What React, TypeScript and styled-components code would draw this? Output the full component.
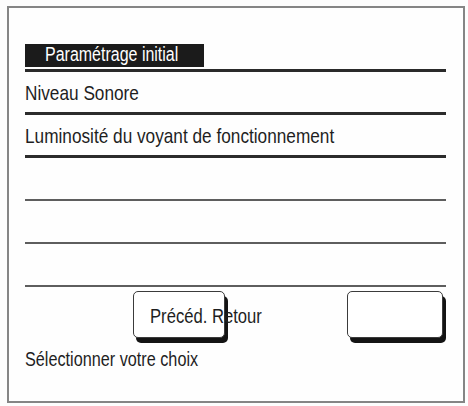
import styled, { createGlobalStyle } from "styled-components";

const fontStack = `"Liberation Sans", Arial, sans-serif`;

const GlobalStyle = createGlobalStyle`
  html, body {
    margin: 0;
    padding: 0;
    background: #fdfdfd;
  }
  body {
    font-family: ${fontStack};
    color: #1e1e1e;
  }
`;

// the screen uses a narrow sans, emulated by squeezing Liberation Sans
const Narrow = styled.span<{ $size: number }>`
  display: inline-block;
  font-size: ${({ $size }) => $size}px;
  white-space: nowrap;
  transform: scaleX(0.82);
  transform-origin: left center;
`;

const Frame = styled.div`
  box-sizing: border-box;
  width: 458px;
  height: 397px;
  margin: 6px 0 0 7px;
  padding: 36px 0 0 16px;
  border: 2px solid #858585;
  background: #fefefe;
  display: flex;
  flex-direction: column;
`;

const Content = styled.div`
  width: 421px;
  display: flex;
  flex-direction: column;
`;

const TitleBar = styled.div`
  box-sizing: border-box;
  width: 179px;
  height: 23px;
  padding-left: 20px;
  background: #1b1b1b;
  color: #ffffff;
  line-height: 21px;
  overflow: hidden;
`;

const TitleRule = styled.div`
  height: 3px;
  margin-top: 2px;
  background: #2a2a2a;
`;

const Row = styled.div<{ $strong?: boolean }>`
  box-sizing: border-box;
  height: 43px;
  display: flex;
  align-items: flex-end;
  padding-bottom: 7px;
  border-bottom: ${({ $strong }) =>
    $strong ? "3px solid #2c2c2c" : "2px solid #5e5e5e"};
  line-height: 24px;
`;

const ButtonRow = styled.div`
  display: flex;
  gap: 122px;
  margin-top: 4px;
  padding-left: 108px;
`;

const Button = styled.div<{ $width: number }>`
  box-sizing: border-box;
  width: ${({ $width }) => $width}px;
  height: 47px;
  padding: 12px 0 0 16px;
  border: 1.5px solid #3b3b3b;
  border-radius: 5px;
  background: #ffffff;
  box-shadow: 3px 5px 0 #141414;
  line-height: 24px;
  color: #1e1e1e;
`;

const Hint = styled.div`
  margin-top: 9px;
  line-height: 24px;
`;

export default function App() {
  return (
    <>
      <GlobalStyle />
      <Frame>
        <Content>
          <TitleBar>
            <Narrow $size={19.5}>Paramétrage initial</Narrow>
          </TitleBar>
          <TitleRule />
          <Row $strong>
            <Narrow $size={21}>Niveau Sonore</Narrow>
          </Row>
          <Row $strong>
            <Narrow $size={21}>Luminosité du voyant de fonctionnement</Narrow>
          </Row>
          <Row />
          <Row />
          <Row />
          <ButtonRow>
            <Button $width={92}>
              <Narrow $size={20.3}>Précéd. Retour</Narrow>
            </Button>
            <Button $width={96} />
          </ButtonRow>
          <Hint>
            <Narrow $size={19.8}>Sélectionner votre choix</Narrow>
          </Hint>
        </Content>
      </Frame>
    </>
  );
}
